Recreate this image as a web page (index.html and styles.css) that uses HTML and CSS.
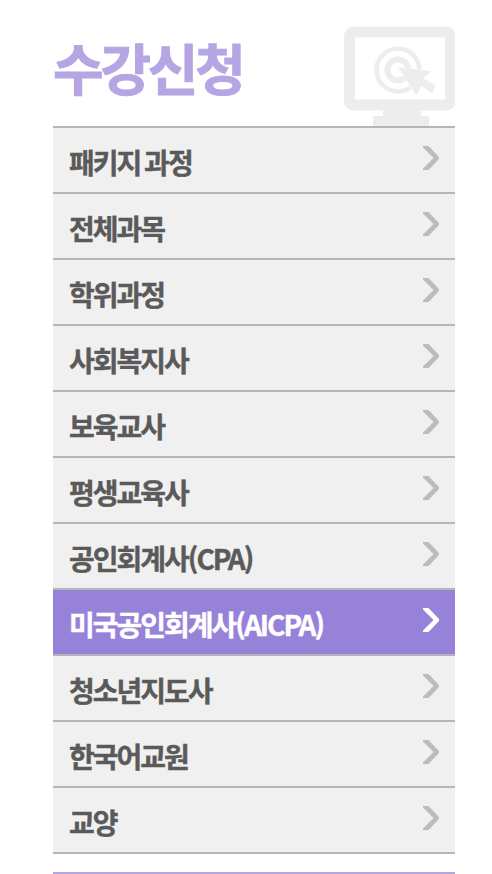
FILE: index.html
```html
<!DOCTYPE html>
<html lang="ko">
<head>
    <meta charset="UTF-8">
    <meta name="viewport" content="width=device-width, initial-scale=1.0">
    <title>수강신청</title>
    <link rel="stylesheet" href="styles.css">
</head>
<body>
    <div class="side">
        <div class="side-head">
            <h2>수강신청</h2>
            <svg class="monitor" width="111" height="100" viewBox="0 0 111 100">
                <rect x="5.5" y="6" width="101" height="73" rx="4" fill="none" stroke="#ededed" stroke-width="11"/>
                <path d="M39 84h38v6h8v10H29V90h10z" fill="#ededed"/>
                <circle cx="54" cy="44" r="21.5" fill="none" stroke="#ededed" stroke-width="4.6"/>
                <circle cx="54" cy="44" r="10.5" fill="none" stroke="#ededed" stroke-width="6"/>
                <path d="M54 41l32 4v2l-7 5 13 8-4 7-11-7-4 9h-1z" fill="#ededed" stroke="#fff" stroke-width="1" paint-order="stroke"/>
            </svg>
        </div>
        <ul class="menu">
            <li><a href="#">패키지 과정</a></li>
            <li><a href="#">전체과목</a></li>
            <li><a href="#">학위과정</a></li>
            <li><a href="#">사회복지사</a></li>
            <li><a href="#">보육교사</a></li>
            <li><a href="#">평생교육사</a></li>
            <li><a href="#">공인회계사(CPA)</a></li>
            <li class="on"><a href="#">미국공인회계사(AICPA)</a></li>
            <li><a href="#">청소년지도사</a></li>
            <li><a href="#">한국어교원</a></li>
            <li><a href="#">교양</a></li>
        </ul>
        <div class="side-line"></div>
    </div>

    <script>
        // same arrow for every menu item
        document.querySelectorAll(".menu a").forEach(a => {
            a.insertAdjacentHTML("beforeend", '<svg class="arrow" width="16" height="24" viewBox="0 0 16 24"><path d="M0 0h5.5L16 11v2L5.5 24H0v-1.5L10.5 12 0 1.5z"/></svg>');
        });
    </script>
</body>
</html>
```

FILE: styles.css
```css
* { box-sizing: border-box; }
body {
    margin: 0;
    height: 874px;
    overflow: hidden;
    background: #fff;
    font-family: 'Noto Sans CJK KR', sans-serif;
}
.side {
    width: 402px;
    margin-left: 53px;
}
.side-head {
    display: flex;
    justify-content: space-between;
    height: 126px;
    padding-top: 26px;
}
h2 {
    margin: 0;
    font-size: 55px;
    line-height: 80px;
    font-weight: 700;
    letter-spacing: -3.2px;
    color: #b5a6e3;
    -webkit-text-stroke: 1px #b5a6e3;
    filter: blur(0.5px);
}
.monitor {
    display: block;
    filter: blur(0.6px);
}
.menu {
    list-style: none;
    margin: 0;
    padding: 0;
    border-top: 2px solid #b6b6b6;
}
.menu li {
    height: 66px;
    background: #f0f0f0;
    border-bottom: 2px solid #b6b6b6;
}
.menu a {
    display: flex;
    justify-content: space-between;
    align-items: flex-start;
    height: 64px;
    padding: 17px 16px 0;
    font-size: 28px;
    line-height: 34px;
    font-weight: 700;
    letter-spacing: -2px;
    word-spacing: -2px;
    color: #5a5a5a;
    text-decoration: none;
    -webkit-text-stroke: 0.4px;
}
.arrow {
    margin-top: 1px;
    fill: #bcbcbc;
    stroke: none;
}
.menu .on { background: #9682d9; }
.on a { color: #fff; }
.on .arrow { fill: #fff; }
.side-line {
    height: 2px;
    margin-top: 18px;
    background: #b5a6e3;
}
```
